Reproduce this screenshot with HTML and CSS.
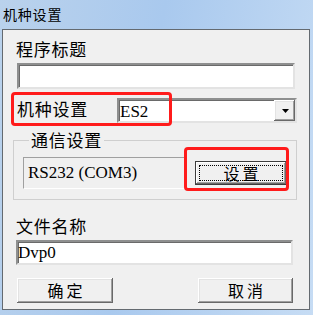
FILE: index.html
```html
<!DOCTYPE html>
<html>
<head>
<meta charset="utf-8">
<link rel="stylesheet" href="styles.css">
</head>
<body>
<div class="window">
  <div class="titlebar">机种设置</div>
  <div class="client">
    <div class="label l1">程序标题</div>
    <div class="edit e1"></div>
    <div class="row">
      <span class="label row-label">机种设置</span>
      <div class="combo">
        <span class="combo-text">ES2</span>
        <span class="drop-btn"><svg width="7" height="4" viewBox="0 0 7 4"><path d="M0 0H7L3.5 4Z" fill="#000"/></svg></span>
      </div>
    </div>
    <fieldset class="group">
      <legend class="label">通信设置</legend>
      <div class="group-row">
        <div class="static">RS232 (COM3)</div>
        <button class="btn default"><span class="focus">设置</span></button>
      </div>
    </fieldset>
    <div class="label l2">文件名称</div>
    <div class="edit e2">Dvp0</div>
    <div class="buttons">
      <button class="btn ok">确定</button>
      <button class="btn cancel">取消</button>
    </div>
    <div class="mark mark1"></div>
    <div class="mark mark2"></div>
  </div>
</div>
</body>
</html>
```
FILE: styles.css
```css
* { box-sizing: border-box; }
html, body { margin: 0; padding: 0; }
body {
  width: 313px;
  height: 315px;
  overflow: hidden;
  background: linear-gradient(100deg, #bad2ec 0%, #a9c9ee 45%, #c6dcf4 100%);
  font-family: "Noto Sans CJK SC", "Noto Sans", sans-serif;
}
.window { width: 313px; height: 315px; }
.titlebar {
  height: 29px;
  line-height: 29px;
  padding-left: 3px;
  font-size: 14px;
  letter-spacing: 0.8px;
  color: #000;
}
.client {
  position: relative;
  margin-left: 2px;
  width: 308px;
  height: 281px;
  border: 1px solid #646a70;
  background: #f0f0f0;
}
.label {
  font-size: 17px;
  line-height: 18px;
  letter-spacing: 0.75px;
  color: #000;
}
.l1 { margin: 10px 0 0 13px; }
.edit {
  background: #fff;
  border-style: solid;
  border-width: 2px;
  border-color: #8e8f8f #e3e3e3 #e3e3e3 #8e8f8f;
  box-shadow: inset 1px 1px 0 #6a6a6a;
  font-family: "Liberation Serif", serif;
  font-size: 17px;
  line-height: 21px;
  color: #000;
}
.e1 { margin: 5px 0 0 14px; width: 278px; height: 26px; }
.row { display: flex; margin: 9px 0 0 14px; height: 25px; }
.row-label { width: 100px; padding-top: 2px; }
.combo {
  position: relative;
  display: flex;
  width: 180px;
  height: 25px;
  background: #fff;
  border-style: solid;
  border-width: 2px;
  border-color: #8e8f8f #e3e3e3 #e3e3e3 #8e8f8f;
  box-shadow: inset 1px 1px 0 #6a6a6a;
}
.combo-text {
  flex: 1;
  padding: 2px 0 0 1px;
  font-family: "Liberation Serif", serif;
  font-size: 17px;
  line-height: 19px;
  color: #000;
}
.drop-btn {
  width: 21px;
  height: 21px;
  display: flex;
  align-items: center;
  justify-content: center;
  background: #f0f0f0;
  box-shadow: inset -1px -1px 0 #696969, inset 1px 1px 0 #fff, inset -2px -2px 0 #a0a0a0, inset 2px 2px 0 #e3e3e3;
  padding-left: 1px;
  padding-top: 1px;
}
.drop-btn svg { display: block; }
.group {
  margin: 8px 0 0 10px;
  width: 284px;
  padding: 0 0 10px 9px;
  border: 1px solid #cfcfcf;
  min-width: 0;
}
.group legend {
  margin-left: 6px;
  padding: 0 2px;
}
.group-row { display: flex; align-items: center; margin-top: 8px; }
.static {
  width: 163px;
  height: 32px;
  border-style: solid;
  border-width: 1px;
  border-color: #a0a0a0 #fff #fff #a0a0a0;
  padding-left: 4px;
  font-family: "Liberation Serif", serif;
  font-size: 17px;
  line-height: 30px;
  color: #000;
}
.btn {
  display: flex;
  align-items: center;
  justify-content: center;
  padding: 0 0 2px 0;
  margin: 0;
  border: none;
  background: #f0f0f0;
  box-shadow: inset -1px -1px 0 #696969, inset 1px 1px 0 #fff, inset -2px -2px 0 #a0a0a0, inset 2px 2px 0 #e3e3e3;
  font-family: "Noto Sans CJK SC", "Noto Sans", sans-serif;
  font-size: 16px;
  letter-spacing: 3px;
  line-height: 18px;
  color: #000;
}
.btn.default {
  margin-left: 9px;
  width: 92px;
  height: 24px;
  padding: 3px;
  border: 1px solid #3c3c3c;
  box-shadow: inset -1px -1px 0 #696969, inset 1px 1px 0 #fff, inset -2px -2px 0 #a0a0a0;
}
.focus {
  flex: 1;
  align-self: stretch;
  display: flex;
  align-items: center;
  justify-content: center;
  border: 1px dotted #000;
  padding-left: 3px;
  padding-bottom: 1px;
}
.l2 { margin: 17px 0 0 13px; }
.e2 { margin: 5px 0 0 13px; width: 277px; height: 25px; padding-left: 0; }
.buttons { display: flex; margin: 13px 0 0 14px; }
.buttons .btn { height: 25px; padding-left: 3px; }
.ok { width: 96px; }
.cancel { width: 95px; margin-left: 85px; }
.mark {
  position: absolute;
  border: 3px solid #ff1b1b;
  border-radius: 4px;
}
.mark1 { left: 8px; top: 62px; width: 161px; height: 34px; }
.mark2 { left: 181px; top: 117px; width: 105px; height: 44px; }
```
